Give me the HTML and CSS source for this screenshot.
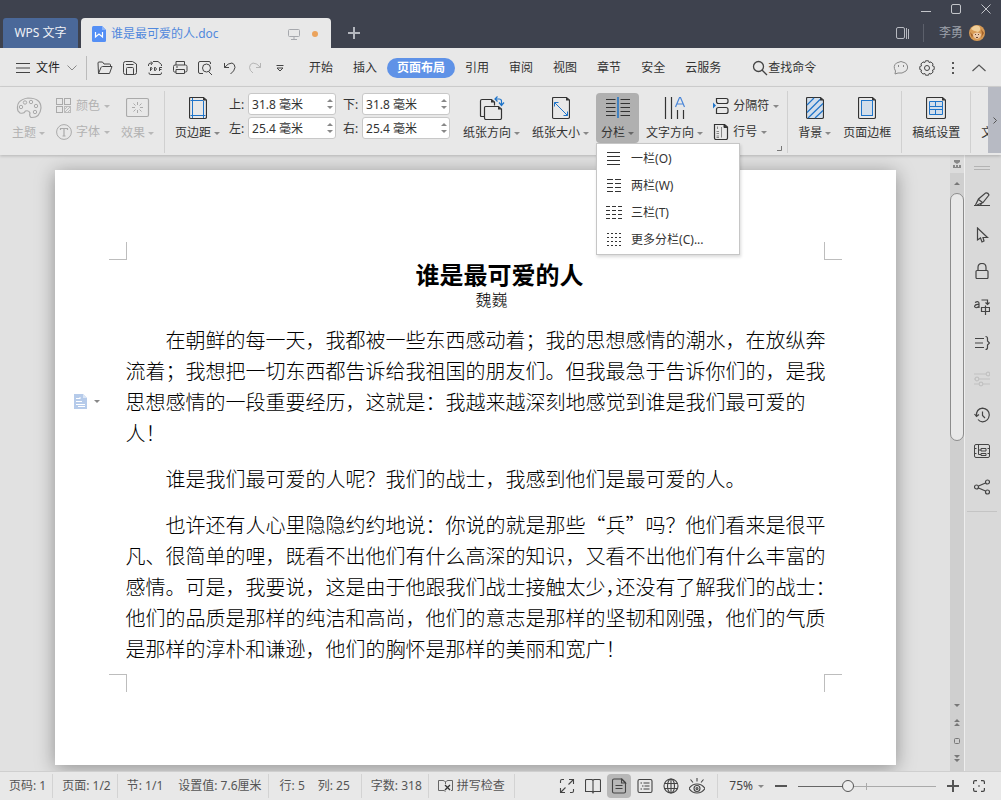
FILE: index.html
```html
<!DOCTYPE html>
<html lang="zh-CN">
<head>
<meta charset="utf-8">
<title>谁是最可爱的人.doc - WPS 文字</title>
<link rel="stylesheet" href="styles.css">
</head>
<body>
<header class="titlebar">
  <div class="doc-tabs">
    <button class="home-tab">WPS 文字</button>
    <div class="doc-tab">
      <svg class="ic" width="14" height="16" viewBox="0 0 14 16"><path d="M1.500 0H10L14 4V14.500Q14 16 12.500 16H1.500Q0 16 0 14.500V1.500Q0 0 1.500 0Z" fill="#548ff5"/><path d="M10 0V4H14Z" fill="#8ab3fa"/><path d="M3.500 6V11L7 8L10.500 11V6" fill="none" stroke="#fff" stroke-width="1.200"/></svg>
      <span class="doc-name">谁是最可爱的人.doc</span>
      <svg class="ic" width="12" height="12" viewBox="0 0 12 12" fill="none" stroke="#a6a8ad"><rect x=".5" y="1.500" width="11" height="7" rx="1"/><path d="M6 8.500V11M3 11.500H9"/></svg>
      <span class="unsaved"></span>
    </div>
    <button class="new-tab" aria-label="新建"><svg width="12" height="12" viewBox="0 0 12 12" stroke="#b4b7be" stroke-width="2"><path d="M6 0V12M0 6H12"/></svg></button>
  </div>
  <div class="window-side">
    <div class="window-buttons">
      <button aria-label="最小化"><svg width="10" height="10" viewBox="0 0 10 10" stroke="#c3c5ca"><path d="M0 7.500H10"/></svg></button>
      <button aria-label="最大化"><svg width="10" height="10" viewBox="0 0 10 10" fill="none" stroke="#c3c5ca"><rect x=".5" y=".5" width="9" height="9" rx="1.500"/></svg></button>
      <button aria-label="关闭"><svg width="10" height="10" viewBox="0 0 10 10" stroke="#c3c5ca"><path d="M.5 .5L9.500 9.500M9.500 .5L.5 9.500"/></svg></button>
    </div>
    <div class="account">
      <button aria-label="工作区"><svg width="14" height="12" viewBox="0 0 14 12" fill="none" stroke="#b7b9c0"><rect x=".5" y=".5" width="8" height="11" rx="1.500"/><path d="M10.500 1V12M12.500 2V12"/></svg></button>
      <span class="account-line"></span>
      <span>李勇</span>
      <svg width="16" height="16" viewBox="0 0 16 16"><circle cx="8" cy="8" r="8" fill="#d79a55"/><path d="M2 4Q5-1 10 1Q13 5 9 7Q4 6 2 4Z" fill="#f1cf9a"/><path d="M4 9Q8 6 12 9Q12 13 8 14Q4 13 4 9Z" fill="#ecc9a8"/><path d="M6 9H7V10H6ZM9 9H10V10H9ZM7 12H9V13H7Z" fill="#6b4430"/><path d="M1 7L4 10L3 13ZM12 4L15 8L12 13L13 9Z" fill="#a3622b"/></svg>
    </div>
  </div>
</header>

<nav class="menubar">
  <button class="file-menu"><svg width="14" height="10" viewBox="0 0 14 10" stroke="#444"><path d="M0 .5H14M0 5H14M0 9.500H14"/></svg><span>文件</span><svg class="file-chevron" width="10" height="6" viewBox="0 0 10 6" fill="none" stroke="#888"><path d="M.5 .5L5 5L9.500 .5"/></svg></button>
  <div class="quick">
    <button aria-label="打开"><svg width="16" height="16" viewBox="0 0 16 16"><path d="M1.500 13.500L1 3Q1 2 2 2H5.500L7 4H12.500Q13.500 4 13.500 5V6.500M1.500 13.500L4 7.500Q4.500 6.500 5.500 6.500H15L12.500 13.500Z"/></svg></button>
    <button aria-label="保存"><svg width="16" height="16" viewBox="0 0 16 16"><path d="M3.500 1.500H10.500L14.500 4V12.500Q14.500 14.500 12.500 14.500H3.500Q1.500 14.500 1.500 12.500V3.500Q1.500 1.500 3.500 1.500ZM4 4.500H11.500M4.500 14V8.500Q4.500 7.500 5.500 7.500H10.500Q11.500 7.500 11.500 8.500V14"/></svg></button>
    <button aria-label="输出为PDF"><svg width="16" height="16" viewBox="0 0 16 16"><path d="M6 1.500H11L14.500 4.500V6M14.500 12.500V13Q14.500 14.500 13 14.500H3.500Q2 14.500 2 13V12.500M1.500 6V5Q1.500 3 4 3H5M4 1.500L5.500 3L4 5M3.500 11V7.500H4.500Q5.500 8.500 4.500 9.500H3.500M7.500 7.500V10.500H8.500Q10.500 9 8.500 7.500ZM12.500 11V7.500H15M12.500 9.500H14.500"/></svg></button>
    <button aria-label="打印"><svg width="16" height="16" viewBox="0 0 16 16"><path d="M4 5V1.500H12.500V5M4 12H2.500Q1.500 12 1.500 10.500V6.500Q1.500 5 3 5H13.500Q15 5 15 6.500V10.500Q15 12 13.500 12H12.500M4 9.500H12.500V13.500H4ZM4 7H6"/></svg></button>
    <button aria-label="打印预览"><svg width="16" height="16" viewBox="0 0 16 16"><path d="M13.500 4V3Q13.500 1.500 12 1.500H3Q1.500 1.500 1.500 3V12Q1.500 13.500 3 13.500H6M11.500 11.500L15 15"/><circle cx="9.500" cy="8" r="4"/></svg></button>
    <button aria-label="撤销"><svg width="16" height="16" viewBox="0 0 16 16"><path d="M2.500 3V7.500H7M2.500 7.500Q6 3 10 3Q13 4 13 7.500Q12.500 11 8.500 14"/></svg></button>
    <button aria-label="恢复" disabled><svg width="16" height="16" viewBox="0 0 16 16"><path d="M13.500 3V7.500H9M13.500 7.500Q10 3 6 3Q2.500 4 2.500 7.500Q2.500 10.500 6 13"/></svg></button>
    <button aria-label="自定义"><svg width="16" height="16" viewBox="0 0 16 16"><path d="M4.500 5.500H11.500M5 8L8 11L11 8Z"/></svg></button>
  </div>
  <div class="tabs">
    <button>开始</button><button>插入</button><button class="active">页面布局</button><button>引用</button><button>审阅</button><button>视图</button><button>章节</button><button>安全</button><button>云服务</button>
  </div>
  <button class="search"><svg width="16" height="16" viewBox="0 0 16 16" fill="none" stroke="#444" stroke-width="1.300"><circle cx="6.500" cy="6.500" r="5"/><path d="M10 10L15 15"/></svg><span>查找命令</span></button>
  <div class="menu-right">
    <button aria-label="反馈"><svg width="16" height="16" viewBox="0 0 16 16" fill="none" stroke="#888"><path d="M2.500 11Q-.5 6 3.500 3Q8 0 12.500 3Q16.500 7 13 11Q9 14 5 13L2 14Z"/><path d="M5.500 5V7M10.500 5V7"/></svg></button>
    <button aria-label="设置"><svg width="16" height="16" viewBox="0 0 16 16" fill="none" stroke="#444"><path d="M6.500 .8H9.500L10.200 2.600L12 1.900L14.100 4L13.400 5.800L15.200 6.500V9.500L13.400 10.200L14.100 12L12 14.100L10.200 13.400L9.500 15.200H6.500L5.800 13.400L4 14.100L1.900 12L2.600 10.200L.8 9.500V6.500L2.600 5.800L1.900 4L4 1.900L5.800 2.600Z" stroke-linejoin="round"/><circle cx="8" cy="8" r="2.500"/></svg></button>
    <button aria-label="更多"><svg width="4" height="14" viewBox="0 0 4 14" fill="#555"><path d="M1 1H3V3H1ZM1 6H3V8H1ZM1 11H3V13H1Z"/></svg></button>
    <button aria-label="收起功能区"><svg width="14" height="8" viewBox="0 0 14 8" fill="none" stroke="#555" stroke-width="1.200"><path d="M.5 7L7 1L13.500 7"/></svg></button>
  </div>
</nav>

<section class="ribbon">
  <div class="group theme-group">
    <button class="big" disabled>
      <svg width="26" height="24" viewBox="0 0 26 24" fill="none" stroke="#aaa"><path d="M2 15Q-1 4 12 2Q25 2 25 12Q24 22 15 21.500Q13 20 14 17Q13 14 9.500 15Q8 18 4 17Z" stroke-width="1.200"/><circle cx="5" cy="11" r="1.700"/><circle cx="9" cy="6.500" r="1.700"/><circle cx="15" cy="6" r="1.700"/><circle cx="20" cy="10" r="1.700"/><circle cx="19" cy="16" r="1.700"/></svg>
      <span class="label">主题<i class="caret"></i></span>
    </button>
    <div class="stack">
      <button class="small" disabled><svg width="16" height="16" viewBox="0 0 16 16" fill="none" stroke="#aaa"><rect x=".5" y=".5" width="6" height="6"/><rect x="8.500" y=".5" width="6" height="6"/><rect x=".5" y="8.500" width="6" height="6"/><rect x="8.500" y="8.500" width="6" height="6" stroke="#bbb"/><path d="M9 11L11 9M9 14L14 9M12 14L14 12" stroke="#bbb"/></svg><span>颜色</span><i class="caret"></i></button>
      <button class="small" disabled><svg width="16" height="16" viewBox="0 0 16 16" fill="none" stroke="#aaa"><circle cx="8" cy="8" r="7.400"/><path d="M4.500 6V4.500H11.500V6M8 4.500V12M6.500 12H9.500" stroke-width="1.200"/></svg><span>字体</span><i class="caret"></i></button>
    </div>
    <button class="big" disabled>
      <svg width="24" height="24" viewBox="0 0 24 24" fill="none" stroke="#aaa"><rect x=".5" y="2.500" width="22" height="18" rx="1.500" stroke-width="1.200"/><path d="M11.500 6V9M11.500 14V17M6 11.500H9M14 11.500H17M7.500 7.500L9.500 9.500M13.500 13.500L15.500 15.500M15.500 7.500L13.500 9.500M9.500 13.500L7.500 15.500"/></svg>
      <span class="label">效果<i class="caret"></i></span>
    </button>
  </div>

  <div class="group page-group">
    <button class="big">
      <svg width="18" height="24" viewBox="0 0 18 24" fill="none"><path d="M.5 2.500Q.5 1.500 1.500 1.500H14.500L17.500 4V21Q17.500 22.500 16 22.500H2Q.5 22.500 .5 21Z" stroke="#333" stroke-width="1.200"/><path d="M14 1.500V4.500H17.500Z" fill="#333"/><path d="M3.500 2V22M14.500 5V22M1.500 4.500H14M1.500 19.500H16.500" stroke="#1f74c9"/></svg>
      <span class="label">页边距<i class="caret"></i></span>
    </button>
    <div class="margins">
      <div class="field"><label for="m-top">上:</label><div class="spin"><input id="m-top" type="text" value="31.8 毫米"><span class="steps"><button aria-label="增加"></button><button class="down" aria-label="减少"></button></span></div></div>
      <div class="field"><label for="m-bottom">下:</label><div class="spin"><input id="m-bottom" type="text" value="31.8 毫米"><span class="steps"><button aria-label="增加"></button><button class="down" aria-label="减少"></button></span></div></div>
      <div class="field"><label for="m-left">左:</label><div class="spin"><input id="m-left" type="text" value="25.4 毫米"><span class="steps"><button aria-label="增加"></button><button class="down" aria-label="减少"></button></span></div></div>
      <div class="field"><label for="m-right">右:</label><div class="spin"><input id="m-right" type="text" value="25.4 毫米"><span class="steps"><button aria-label="增加"></button><button class="down" aria-label="减少"></button></span></div></div>
    </div>
    <button class="big">
      <svg width="26" height="24" viewBox="0 0 26 24" fill="none"><path d="M5 20.500H2.500Q1.500 20.500 1.500 19.500V5Q1.500 3.500 3 3.500H12.500L15.500 6V9.500" stroke="#333" stroke-width="1.200"/><path d="M5.500 11.500Q5.500 10.500 6.500 10.500H19.500L22.500 13V22Q22.500 23.500 21 23.500H7Q5.500 23.500 5.500 22Z" stroke="#333" stroke-width="1.200"/><path d="M12 3.500V6.500H15.500ZM19 10.500V13.500H22.500Z" fill="#333"/><path d="M18.500 .5L16 3L18.500 5.500M16 3H20Q22.500 3 22.500 5V9M20 6.500L22.500 9.500L25 6.500" stroke="#1f74c9" stroke-width="1.200"/></svg>
      <span class="label">纸张方向<i class="caret"></i></span>
    </button>
    <button class="big">
      <svg width="18" height="24" viewBox="0 0 18 24" fill="none"><path d="M.5 2.500Q.5 1.500 1.500 1.500H14.500L17.500 4V21Q17.500 22.500 16 22.500H2Q.5 22.500 .5 21Z" stroke="#333" stroke-width="1.200"/><path d="M14 1.500V4.500H17.500Z" fill="#333"/><path d="M2.500 6.500L15.500 19.500M2.500 10.500V6.500H6.500M15.500 15.500V19.500H11.500" stroke="#1f74c9"/></svg>
      <span class="label">纸张大小<i class="caret"></i></span>
    </button>
    <div class="has-menu">
      <button class="big pressed" aria-expanded="true">
        <svg width="24" height="24" viewBox="0 0 24 24" stroke="#333"><path d="M0 3.500H9.500M0 7.500H9.500M0 11.500H9.500M0 15.500H9.500M0 19.500H9.500M14.500 3.500H24M14.500 7.500H24M14.500 11.500H24M14.500 15.500H24M14.500 19.500H24"/><path d="M12 1V22" stroke="#1f74c9" stroke-width="1.500"/></svg>
        <span class="label">分栏<i class="caret"></i></span>
      </button>
      <div class="menu">
        <button><svg width="16" height="14" viewBox="0 0 16 14" stroke="#333"><path d="M1 .5H14M1 4.500H14M1 8.500H14M1 12.500H14"/></svg>一栏(O)</button>
        <button><svg width="16" height="14" viewBox="0 0 16 14" stroke="#333"><path d="M1 .5H15M1 4.500H15M1 8.500H15M1 12.500H15" stroke-dasharray="6 2"/></svg>两栏(W)</button>
        <button><svg width="16" height="14" viewBox="0 0 16 14" stroke="#333"><path d="M0 .5H16M0 4.500H16M0 8.500H16M0 12.500H16" stroke-dasharray="4 2"/></svg>三栏(T)</button>
        <button><svg width="16" height="14" viewBox="0 0 16 14" stroke="#333"><path d="M1 .5H15M1 4.500H15M1 8.500H15M1 12.500H15" stroke-dasharray="2 2"/></svg>更多分栏(C)...</button>
      </div>
    </div>
    <button class="big">
      <svg width="22" height="24" viewBox="0 0 22 24" fill="none" stroke="#333" stroke-width="1.200"><path d="M1.500 1V23M7.500 1V23M13.500 14V23M19.500 14V23"/><path d="M11.500 11L15.500 1.500H16.500L20.500 11M13 8H19" stroke="#4a86d8"/></svg>
      <span class="label">文字方向<i class="caret"></i></span>
    </button>
    <div class="stack breaks">
      <button class="small"><svg width="16" height="18" viewBox="0 0 16 18" fill="none" stroke="#333" stroke-width="1.200"><path d="M3.500 1V4.500Q3.500 6.500 5.500 6.500H13Q15 6.500 15 4.500V3.500Q15 1.500 13 1.500H3.500M3.500 17V12.500Q3.500 10.500 5.500 10.500H13Q15 10.500 15 12.500V14.500Q15 16.500 13 16.500H3.500"/><path d="M0 5.500L3 8.500L0 11.500Z" fill="#1f74c9" stroke="none"/></svg><span>分隔符</span><i class="caret"></i></button>
      <button class="small"><svg width="16" height="16" viewBox="0 0 16 16" fill="none" stroke="#333"><path d="M1.500 .5H11.500L14.500 3V14Q14.500 15.500 13 15.500H3Q1.500 15.500 1.500 14Z" stroke-width="1.200"/><path d="M11 1V3.500H14Z" fill="#333"/><path d="M4.500 2.500V5M3.500 7.500H6M3.500 9.500H6M3.500 12H6M3.500 13.500H6M8.500 3V13.500" stroke="#888"/></svg><span>行号</span><i class="caret"></i></button>
    </div>
    <button class="launcher" aria-label="页面设置"><svg width="5" height="5" viewBox="0 0 5 5" fill="none" stroke="#777"><path d="M4.500 0V4.500H0"/></svg></button>
  </div>

  <div class="group">
    <button class="big">
      <svg width="18" height="24" viewBox="0 0 18 24" fill="none"><path d="M.5 2.500Q.5 1.500 1.500 1.500H14.500L17.500 4V21Q17.500 22.500 16 22.500H2Q.5 22.500 .5 21Z" stroke="#333" stroke-width="1.200" fill="#d2deeb"/><path d="M14 1.500V4.500H17.500Z" fill="#333"/><path d="M1 9L8 2M1 16.500L14 3.500M2 22L17 7.500M9 22L17 14.500" stroke="#1f74c9" stroke-width="1.200"/></svg>
      <span class="label">背景<i class="caret"></i></span>
    </button>
    <button class="big">
      <svg width="18" height="24" viewBox="0 0 18 24" fill="none"><path d="M.5 2.500Q.5 1.500 1.500 1.500H14.500L17.500 4V21Q17.500 22.500 16 22.500H2Q.5 22.500 .5 21Z" stroke="#333" stroke-width="1.200"/><path d="M14 1.500V4.500H17.500Z" fill="#333"/><rect x="3.500" y="4.500" width="11" height="15" stroke="#1f74c9" fill="#d2deeb"/></svg>
      <span class="label">页面边框</span>
    </button>
  </div>

  <div class="group">
    <button class="big">
      <svg width="20" height="24" viewBox="0 0 20 24" fill="none"><path d="M.5 2.500Q.5 1.500 1.500 1.500H16.500L19.500 4V21Q19.500 22.500 18 22.500H2Q.5 22.500 .5 21Z" stroke="#333" stroke-width="1.200"/><path d="M16 1.500V4.500H19.500Z" fill="#333"/><path d="M3.500 5.500H16.500V18.500H3.500ZM3.500 10.500H16.500M3.500 13.500H16.500M9.500 5.500V10.500M9.500 13.500V18.500" stroke="#1f74c9" fill="#d2deeb"/></svg>
      <span class="label">稿纸设置</span>
    </button>
  </div>

  <div class="group rest">
    <button class="big"><span class="no-icon"></span><span class="label">文</span></button>
  </div>
  <button class="ribbon-next" aria-label="更多功能"><svg width="4" height="7" viewBox="0 0 4 7" fill="none" stroke="#555"><path d="M.5 .5L3.500 3.500L.5 6.500"/></svg></button>
</section>

<main class="workspace">
  <div class="canvas">
    <article class="page">
      <i class="crop tl"></i><i class="crop tr"></i><i class="crop bl"></i><i class="crop br"></i>
      <button class="para-tool" aria-label="段落布局"><svg width="13" height="15" viewBox="0 0 13 15"><path d="M0 0H9L13 4V15H0Z" fill="#b6cbea"/><path d="M9 0V4H13Z" fill="#dbe6f5"/><path d="M2 4.500H6M2 7.500H8M2 10.500H11M4 12.500H11M6 3V5" stroke="#fff"/></svg><i class="caret"></i></button>
      <h1>谁是最可爱的人</h1>
      <p class="author">魏巍</p>
      <p>在朝鲜的每一天，我都被一些东西感动着；我的思想感情的潮水，在放纵奔流着；我想把一切东西都告诉给我祖国的朋友们。但我最急于告诉你们的，是我思想感情的一段重要经历，这就是：我越来越深刻地感觉到谁是我们最可爱的人！</p>
      <p>谁是我们最可爱的人呢？我们的战士，我感到他们是最可爱的人。</p>
      <p>也许还有人心里隐隐约约地说：你说的就是那些“兵”吗？他们看来是很平凡、很简单的哩，既看不出他们有什么高深的知识，又看不出他们有什么丰富的感情。可是，我要说，这是由于他跟我们战士接触太少<span class="half">，</span>还没有了解我们的战士<span class="half">：</span>他们的品质是那样的纯洁和高尚，他们的意志是那样的坚韧和刚强，他们的气质是那样的淳朴和谦逊，他们的胸怀是那样的美丽和宽广！</p>
    </article>
  </div>
  <div class="scrollbar">
    <button class="ruler-toggle" aria-label="标尺"><svg width="8" height="8" viewBox="0 0 8 8" fill="#888"><path d="M1 0H7V2L4 4L1 2ZM0 5H2V8H0ZM3 5H5V8H3ZM6 5H8V8H6ZM0 7H8V8H0Z"/></svg></button>
    <button class="scroll-up" aria-label="向上"><svg width="6" height="3" viewBox="0 0 6 3" fill="#777"><path d="M0 3L3 0L6 3Z"/></svg></button>
    <div class="thumb"></div>
    <div class="scroll-foot">
      <button aria-label="向下"><svg width="6" height="3" viewBox="0 0 6 3" fill="#777"><path d="M0 0L3 3L6 0Z"/></svg></button>
      <button aria-label="上一页"><svg width="6" height="8" viewBox="0 0 6 8" fill="#777"><path d="M0 3L3 0L6 3ZM0 7L3 4L6 7Z"/></svg></button>
      <button aria-label="选择浏览对象"><svg width="6" height="6" viewBox="0 0 6 6" fill="none" stroke="#777"><rect x=".5" y=".5" width="5" height="5" rx="1"/></svg></button>
      <button aria-label="下一页"><svg width="6" height="8" viewBox="0 0 6 8" fill="#777"><path d="M0 0L3 3L6 0ZM0 4L3 7L6 4Z"/></svg></button>
    </div>
  </div>
  <aside class="sidebar">
    <span class="grip"></span>
    <button aria-label="样式"><svg width="16" height="16" viewBox="0 0 16 16"><path d="M0 14.500H16M1.500 14L4.500 8L11.500 2Q14 1.500 15 4L9 11.500L3 14M4.500 8.500L8.500 11.500M6.500 14L8 12"/></svg></button>
    <button aria-label="选择"><svg width="16" height="16" viewBox="0 0 16 16"><path d="M3.500 1V13L6.500 11L8 15L10 14L9 10.500H13.500Z"/></svg></button>
    <button aria-label="限制编辑"><svg width="16" height="16" viewBox="0 0 16 16"><rect x="2" y="7.500" width="12" height="8" rx="1"/><path d="M4 7.500V4.500Q4 .5 8 .5Q12 .5 12 4.500V7.500"/></svg></button>
    <button aria-label="翻译"><svg width="16" height="16" viewBox="0 0 16 16"><path d="M1 3.500Q5 1.500 5 4.500V9M5 5.500Q1 5 .5 7.500Q1.500 10 5 7.500M7.500 1H13.500V5M11.500 3.500L13.500 5.500L15.500 3.500M7.500 8.500H15.500V12.500H7.500ZM11.500 6.500V16"/></svg></button>
    <button aria-label="章节"><svg width="16" height="16" viewBox="0 0 16 16"><path d="M1 3.500H10M1 8H9M1 12.500H10M11.500 1.500Q13.500 1.500 13.500 3.500V6L15.500 8L13.500 10V12.500Q13.500 14.500 11.500 14.500"/></svg></button>
    <button aria-label="属性" disabled><svg width="16" height="16" viewBox="0 0 16 16"><path d="M0 3H12M0 8H1M5 8H16M0 13H5M9 13H16"/><circle cx="14" cy="3" r="1.800"/><circle cx="3" cy="8" r="1.800"/><circle cx="7" cy="13" r="1.800"/></svg></button>
    <button aria-label="历史版本"><svg width="16" height="16" viewBox="0 0 16 16"><path d="M2.500 9Q2 2 8.500 1.200Q15 2 15.300 8Q14.500 14.500 8.500 14.800Q5.500 14.500 4 12.500M.5 7L2.500 9.500L5 7.500M8.500 4.500V8.500L11 11"/></svg></button>
    <button aria-label="文档结构"><svg width="16" height="16" viewBox="0 0 16 16"><path d="M2 1.500H14Q15.500 1.500 15.500 3V13Q15.500 14.500 14 14.500H2Q.5 14.500 .5 13V3Q.5 1.500 2 1.500M0 5.500H2.500M0 10.500H2.500M13.500 5.500H16M13.500 10.500H16M4.500 1.500V11.500H7M4.500 7H7M7 5.500H12V8H7ZM7 10.500H12V12.500H7Z" stroke-width="1"/></svg></button>
    <button aria-label="分享"><svg width="16" height="16" viewBox="0 0 16 16"><circle cx="2.500" cy="8" r="2"/><circle cx="13.500" cy="3" r="2"/><circle cx="13.500" cy="13" r="2"/><path d="M4.500 7L11.500 4M4.500 9L11.500 12"/></svg></button>
    <span class="side-line"></span>
  </aside>
</main>

<footer class="statusbar">
  <span class="cell">页码: 1</span>
  <span class="cell">页面: 1/2</span>
  <span class="cell wide"><span>节: 1/1</span><span>设置值: 7.6厘米</span></span>
  <span class="cell pos"><span>行: 5</span><span>列: 25</span></span>
  <span class="cell">字数: 318</span>
  <button class="cell spell"><svg width="15" height="13" viewBox="0 0 15 13" fill="none" stroke="#666"><path d="M7.500 2Q6.500 .5 5 .5H.5V10.500H6L7.500 11.500M7.500 2Q8.500 .5 10 .5H14.500V10.500H13M7.500 2V4"/><path d="M7 5L12 10M12 5L7 10" stroke="#333" stroke-width="1.300"/></svg>拼写检查</button>
  <div class="views">
    <button aria-label="全屏显示"><svg width="16" height="16" viewBox="0 0 16 16"><path d="M1.500 5V3Q1.500 1.500 3 1.500H5M10 1.500H14.500V6M14 2L9.500 6.500M14.500 11V13Q14.500 14.500 13 14.500H11M6 14.500H1.500V10M2 14L6.500 9.500"/></svg></button>
    <button aria-label="阅读版式"><svg width="16" height="16" viewBox="0 0 16 16"><path d="M8 2.500L7 1.500H1.500Q.5 1.500 .5 2.500V13.500H7L8 14.500L9 13.500H15.500V2.500Q15.500 1.500 14.500 1.500H9ZM8 2.500V15.500"/></svg></button>
    <button class="on" aria-label="页面视图"><svg width="16" height="16" viewBox="0 0 16 16"><path d="M3 1H11L14.500 4.500V13.500Q14.500 15 13 15H3Q1.500 15 1.500 13.500V2.500Q1.500 1 3 1ZM10.500 1V5H14.500ZM4.500 7.500H11.500M4.500 10.500H11.500"/></svg></button>
    <button aria-label="大纲"><svg width="16" height="16" viewBox="0 0 16 16"><rect x="1" y="1.500" width="14" height="13" rx="1.500"/><path d="M3.500 5H5M6.500 5H12.500M5 8H6.500M7.500 8H12.500M3.500 11H5M6.500 11H12.500"/></svg></button>
    <button aria-label="Web版式"><svg width="16" height="16" viewBox="0 0 16 16"><circle cx="8" cy="8" r="7"/><ellipse cx="8" cy="8" rx="3.500" ry="7"/><path d="M1.500 5.500H14.500M1.500 10.500H14.500M8 1V15"/></svg></button>
    <button aria-label="护眼模式"><svg width="16" height="16" viewBox="0 0 16 16"><path d="M0 10.500Q3 6 8 6Q13 6 16 10.500Q13 15 8 15Q3 15 0 10.500ZM8 0V3.500M1.500 1.500L4 4.500M14.500 1.500L12 4.500"/><circle cx="8" cy="10.500" r="3"/><circle cx="8" cy="10.500" r="1"/></svg></button>
  </div>
  <div class="zoom">
    <button class="zoom-value">75%<i class="caret"></i></button>
    <button aria-label="缩小"><svg width="12" height="12" viewBox="0 0 12 12" stroke="#555" stroke-width="2"><path d="M0 6H12"/></svg></button>
    <input type="range" aria-label="显示比例" min="0" max="100" value="35">
    <button aria-label="放大"><svg width="12" height="12" viewBox="0 0 12 12" stroke="#555" stroke-width="2"><path d="M0 6H12M6 0V12"/></svg></button>
    <button class="fit" aria-label="适合页面"><svg width="12" height="12" viewBox="0 0 12 12" fill="none" stroke="#444" stroke-width="1.200"><path d="M.6 4V2Q.6 .6 2 .6H4M8 .6H10Q11.400 .6 11.400 2V4M11.400 8V10Q11.400 11.400 10 11.400H8M4 11.400H2Q.6 11.400 .6 10V8M5 6H7"/></svg></button>
  </div>
</footer>
</body>
</html>
```
FILE: styles.css
```css
* { box-sizing: border-box; }

body {
  margin: 0;
  min-height: 100vh;
  display: flex;
  flex-direction: column;
  overflow-x: hidden;
  background: #e8e8e8;
  color: #333;
  font: 12px/16px "Noto Sans", "Noto Sans CJK SC", sans-serif;
}

button {
  display: flex;
  align-items: center;
  justify-content: center;
  flex: none;
  margin: 0;
  padding: 0;
  border: 0;
  background: none;
  color: inherit;
  font: inherit;
  white-space: nowrap;
}

svg { display: block; flex: none; }

.caret {
  flex: none;
  border: 3px solid transparent;
  border-top-color: #888;
  border-bottom: 0;
}

/* Title bar */
.titlebar {
  display: flex;
  justify-content: space-between;
  height: 48px;
  background: #3e424e;
}
.doc-tabs {
  display: flex;
  align-items: flex-end;
  padding-left: 3px;
}
.home-tab {
  width: 75px;
  height: 30px;
  margin-right: 3px;
  border-radius: 3px 3px 0 0;
  background: #4a6899;
  color: #f0f2f6;
}
.doc-tab {
  display: flex;
  align-items: center;
  width: 250px;
  height: 30px;
  padding: 2px 13px 0 11px;
  border-radius: 4px 4px 0 0;
  background: #e8e8e8;
}
.doc-name { flex: 1; padding-left: 5px; color: #5189dd; }
.unsaved {
  width: 6px;
  height: 6px;
  margin-left: 12px;
  border-radius: 50%;
  background: #eba35c;
}
.new-tab { width: 46px; height: 30px; }
.window-side { display: flex; flex-direction: column; align-items: flex-end; }
.window-buttons { display: flex; gap: 20px; padding: 4px 10px 0 0; }
.account {
  display: flex;
  align-items: center;
  height: 24px;
  margin-top: 7px;
  padding-right: 16px;
  color: #9da1aa;
}
.account-line { width: 1px; height: 18px; margin: 0 15px 0 13px; background: #5c606b; }
.account svg { margin-left: 6px; }

/* Menu bar */
.menubar {
  display: flex;
  align-items: center;
  height: 39px;
  padding-top: 1px;
  border-bottom: 1px solid #d2d2d2;
}
.file-menu {
  height: 24px;
  padding: 0 9px 0 16px;
  border-right: 1px solid #bbb;
  color: #222;
}
.file-menu span { padding: 0 7px 0 6px; }
.quick { display: flex; padding: 0 7px 0 5px; }
.quick button { width: 25px; height: 24px; }
.quick svg { fill: none; stroke: #444; stroke-width: 1; }
.quick button:disabled svg { stroke: #b5b5b5; }
.tabs { display: flex; }
.tabs button { height: 20px; padding: 0 10px; border-radius: 10px; }
.tabs .active { background: #5f92e7; color: #fff; font-weight: 700; }
.search { margin-left: 21px; }
.menu-right {
  display: flex;
  align-items: center;
  margin-left: auto;
  padding-right: 15px;
}
.menu-right button:nth-child(2) { margin: 0 16px 0 10px; }
.menu-right button:nth-child(3) { margin-right: 17px; }

/* Ribbon */
.ribbon {
  position: relative;
  z-index: 2;
  display: flex;
  height: 68px;
  overflow-x: clip;
  box-shadow: 0 1px 3px rgba(0, 0, 0, .2);
  background: #e8e8e8;
}
.group {
  position: relative;
  display: flex;
  flex: none;
  align-items: flex-start;
  gap: 2px;
  margin: 4px 0 2px;
  padding: 2px 5px 0;
  border-right: 1px solid #d0d0d0;
}
.theme-group { gap: 1px; padding-left: 7px; }
.page-group { padding-right: 3px; }
.big {
  flex-direction: column;
  gap: 5px;
  height: 50px;
  padding: 3px 5px 2px;
  border-radius: 4px;
}
.label { display: flex; align-items: center; gap: 3px; }
.big:disabled, .small:disabled { color: #b2b2b2; }
.big:disabled .caret, .small:disabled .caret { border-top-color: #b8b8b8; }
.no-icon { height: 24px; }
.pressed { background: #b0b0b0; }
.pressed .caret { border-top-color: #666; }
.stack { display: flex; flex-direction: column; align-items: flex-start; }
.breaks { margin-left: -2px; }
.small { gap: 4px; height: 26px; padding: 0 5px; }
.margins {
  display: grid;
  grid-template-columns: auto auto;
  gap: 2px 7px;
  margin: 0 6px 0 2px;
}
.field { display: flex; align-items: center; }
.field label { width: 19px; padding-top: 1px; }
.spin {
  display: flex;
  width: 88px;
  height: 22px;
  border: 1px solid #c8c8c8;
  border-radius: 3px;
  background: #fff;
}
.spin input {
  flex: 1;
  min-width: 0;
  padding: 2px 0 0 3px;
  border: 0;
  outline: 0;
  background: none;
  color: #333;
  font: inherit;
}
.steps { display: flex; flex-direction: column; justify-content: space-evenly; width: 8px; }
.steps button {
  width: 6px;
  border: 3px solid transparent;
  border-top: 0;
  border-bottom-color: #888;
}
.steps .down { border-top: 3px solid #888; border-bottom: 0; }
.launcher { position: absolute; right: 5px; bottom: 2px; }
.rest { flex: 1; min-width: 0; overflow: hidden; border: 0; }
.ribbon-next { width: 13px; height: 66px; background: #b7bac3; }

/* Columns menu */
.has-menu { position: relative; }
.menu {
  position: absolute;
  top: 50px;
  left: 0;
  width: 144px;
  padding: 1px 0;
  border: 1px solid #c6c6c6;
  background: #fff;
  box-shadow: 1px 2px 3px rgba(0, 0, 0, .15);
}
.menu button {
  justify-content: flex-start;
  gap: 9px;
  width: 100%;
  height: 27px;
  padding-left: 9px;
}

/* Document area */
.workspace { display: flex; flex: 1; }
.canvas {
  display: flex;
  flex: 1;
  justify-content: center;
  overflow: hidden;
  padding: 15px 0 6px;
  background: #e1e1e1;
}
.page {
  position: relative;
  width: 841px;
  padding: 89px 70px 100px 71px;
  background: #fff;
  box-shadow: 0 3px 18px rgba(0, 0, 0, .36);
  color: #000;
  font-family: "Noto Sans CJK SC", sans-serif;
  font-weight: 300;
}
.page h1 {
  margin: 0;
  font-size: 24px;
  line-height: 30px;
  text-align: center;
  text-indent: 2em;
}
.page p {
  margin: 0 0 15px;
  font-size: 20px;
  line-height: 31px;
  text-indent: 2em;
}
.page p:last-child { margin-bottom: 0; }
.page .author { margin-bottom: 14px; font-size: 16px; line-height: 21px; text-align: center; }
.half { font-feature-settings: "halt"; }
.crop { position: absolute; width: 18px; height: 18px; border: 0 solid #bdbdbd; }
.tl { top: 72px; left: 54px; border-width: 0 1px 1px 0; }
.tr { top: 72px; right: 54px; border-width: 0 0 1px 1px; }
.bl { bottom: 73px; left: 54px; border-width: 1px 1px 0 0; }
.br { bottom: 73px; right: 54px; border-width: 1px 0 0 1px; }
.para-tool { position: absolute; top: 224px; left: 19px; gap: 7px; }

.scrollbar {
  display: flex;
  flex-direction: column;
  width: 15px;
  border-right: 1px solid #eee;
  background: #cfcfcf;
}
.ruler-toggle { height: 18px; background: #dcdcdc; }
.scroll-up { height: 20px; }
.thumb { height: 248px; border: 1px solid #8c8c8c; border-radius: 7px; background: #e8e8e8; }
.scroll-foot { margin-top: auto; padding-bottom: 3px; }
.scroll-foot button { width: 100%; height: 18px; }

.sidebar {
  display: flex;
  flex-direction: column;
  align-items: center;
  width: 36px;
  padding-right: 2px;
  background: #d9d9d9;
}
.grip { width: 16px; height: 4px; margin: 11px 0; border: 1px solid #b3b3b3; border-width: 1px 0; }
.sidebar button { width: 34px; height: 36px; }
.sidebar svg { fill: none; stroke: #444; stroke-width: 1.2; }
.sidebar button:disabled svg { stroke: #c2c2c2; }
.side-line { width: 30px; height: 1px; margin-top: 6px; background: #c4c4c4; }

/* Status bar */
.statusbar {
  display: flex;
  align-items: center;
  height: 29px;
  border-top: 1px solid #cfcfcf;
  color: #555;
  white-space: nowrap;
}
.cell {
  display: flex;
  align-items: center;
  height: 24px;
  padding: 0 6px 0 9px;
  border-right: 1px solid #d3d3d3;
}
.wide { gap: 15px; }
.pos { gap: 13px; padding: 0 11px; }
.spell { gap: 4px; padding-right: 9px; }
.views { display: flex; gap: 2px; margin-left: auto; padding-right: 8px; border-right: 1px solid #d3d3d3; }
.views button { width: 24px; height: 24px; border-radius: 4px; }
.views svg { fill: none; stroke: #444; stroke-width: 1.1; }
.views .on { background: #b8b8b8; }
.zoom { display: flex; align-items: center; padding-right: 16px; }
.zoom-value { gap: 5px; padding: 0 11px; color: #444; }
.zoom input {
  appearance: none;
  width: 138px;
  height: 14px;
  margin: 0 11px;
  background:
    linear-gradient(#aaa, #aaa) 68px center / 1px 7px no-repeat,
    linear-gradient(90deg, #666 36%, #aaa 36%) center / 100% 1px no-repeat;
}
.zoom input::-webkit-slider-thumb {
  appearance: none;
  width: 12px;
  height: 12px;
  border: 1px solid #555;
  border-radius: 50%;
  background: #eee;
}
.fit { margin-left: 14px; }
```
